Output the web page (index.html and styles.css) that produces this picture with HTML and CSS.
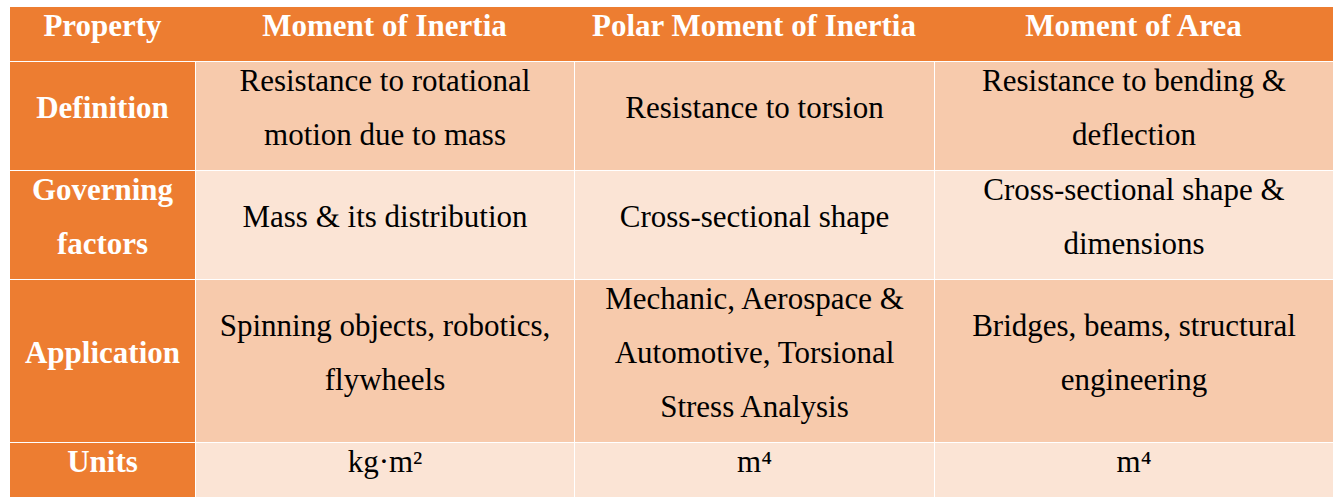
FILE: index.html
```html
<!DOCTYPE html>
<html>
<head>
<meta charset="utf-8">
<link rel="stylesheet" href="styles.css">
</head>
<body>
<table class="tbl">
  <colgroup>
    <col class="w1"><col class="w2"><col class="w3"><col class="w4">
  </colgroup>
  <thead>
    <tr class="head">
      <th><div class="c">Property</div></th>
      <th><div class="c">Moment of Inertia</div></th>
      <th><div class="c">Polar Moment of Inertia</div></th>
      <th><div class="c">Moment of Area</div></th>
    </tr>
  </thead>
  <tbody>
    <tr class="dark">
      <th><div class="c">Definition</div></th>
      <td><div class="c">Resistance to rotational<br>motion due to mass</div></td>
      <td><div class="c">Resistance to torsion</div></td>
      <td><div class="c">Resistance to bending &amp;<br>deflection</div></td>
    </tr>
    <tr class="light">
      <th><div class="c">Governing<br>factors</div></th>
      <td><div class="c">Mass &amp; its distribution</div></td>
      <td><div class="c">Cross-sectional shape</div></td>
      <td><div class="c">Cross-sectional shape &amp;<br>dimensions</div></td>
    </tr>
    <tr class="dark">
      <th><div class="c">Application</div></th>
      <td><div class="c">Spinning objects, robotics,<br>flywheels</div></td>
      <td><div class="c">Mechanic, Aerospace &amp;<br>Automotive, Torsional<br>Stress Analysis</div></td>
      <td><div class="c">Bridges, beams, structural<br>engineering</div></td>
    </tr>
    <tr class="light">
      <th><div class="c">Units</div></th>
      <td><div class="c">kg·m²</div></td>
      <td><div class="c">m⁴</div></td>
      <td><div class="c">m⁴</div></td>
    </tr>
  </tbody>
</table>
</body>
</html>
```

FILE: styles.css
```css
html, body {
  margin: 0;
  padding: 0;
  background: #ffffff;
}

.tbl {
  margin: 7px 0 0 10px;
  width: 1323px;
  table-layout: fixed;
  border-collapse: separate;
  border-spacing: 0;
  font-family: "Liberation Serif", "Times New Roman", serif;
  font-size: 31px;
  line-height: 54px;
}

.w1 { width: 185px; }
.w2 { width: 379px; }
.w3 { width: 360px; }
.w4 { width: 399px; }

.tbl th,
.tbl td {
  padding: 0;
  text-align: center;
  vertical-align: middle;
  white-space: nowrap;
}

.c {
  margin: -8px 0 8px;
}

.head th {
  background: #ed7d31;
  color: #ffffff;
  font-weight: bold;
}

tbody th {
  background: #ed7d31;
  color: #ffffff;
  font-weight: bold;
  border-top: 1px solid #ffffff;
}

tbody td {
  color: #000000;
  font-weight: normal;
  border-top: 1px solid #ffffff;
  border-left: 1px solid #ffffff;
}

.dark td { background: #f7caac; }
.light td { background: #fbe4d5; }
```
